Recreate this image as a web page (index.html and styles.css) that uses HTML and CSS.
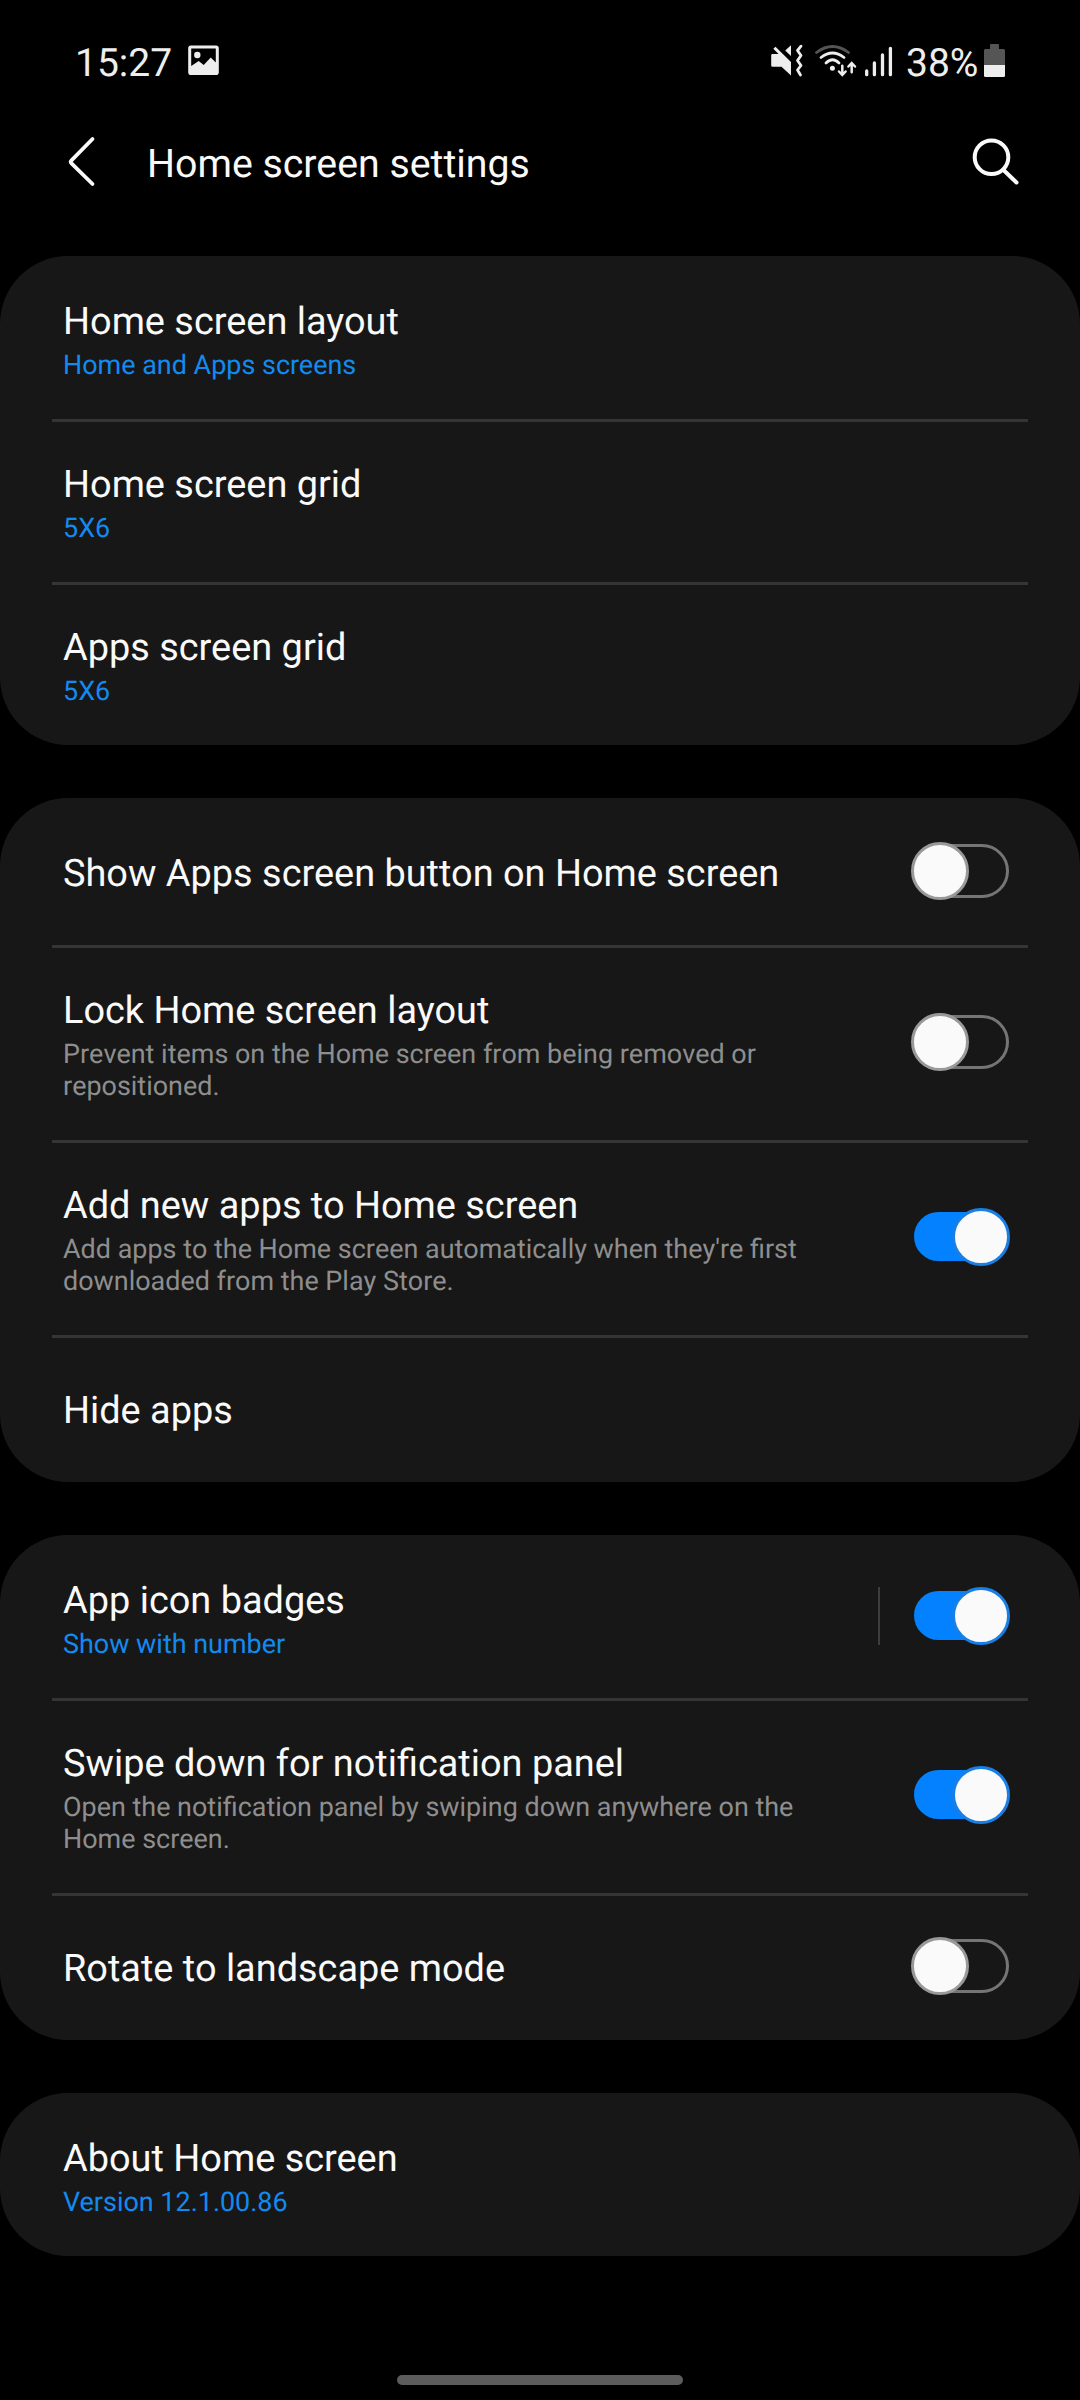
FILE: index.html
```
<!DOCTYPE html>
<html lang="en">
<head>
<meta charset="utf-8">
<title>Home screen settings</title>
<link rel="stylesheet" href="styles.css">
</head>
<body>
<div class="status">
  <span class="clock">15:27</span>
  <svg class="pic" width="32" height="32" viewBox="0 0 32 32"><path fill="#eee" fill-rule="evenodd" d="M3 .5h25a2.8 2.8 0 0 1 2.8 2.8v24a2.8 2.8 0 0 1-2.8 2.800H3A2.800 2.800 0 0 1 .2 27.300v-24A2.800 2.800 0 0 1 3 .5zM3.200 3.500V21l7.500-5 5 4 7-7.500 5.100 5V3.500z"/><circle cx="9.300" cy="10" r="3.200" fill="#eee"/></svg>
  <span class="grow"></span>
  <svg class="indicators" width="136" height="36" viewBox="0 0 136 36" fill="#eee">
    <path d="M2.500 10h6L3.300 4.800l2.200-2.100L21 18v13.500l-9.500-8.700h-9a1.300 1.300 0 0 1-1.300-1.300v-10.200A1.300 1.300 0 0 1 2.500 10z"/>
    <path d="M21 1.300v10.600l-5.800-5.300z"/>
    <path d="M31 2.200l-3.500 4.300 3.500 5-3.500 5 3.500 5-3.500 4.500 3 5" fill="none" stroke="#eee" stroke-width="2.800" stroke-linejoin="round" stroke-linecap="round"/>
    <g fill="none" stroke="#eee" stroke-width="2.800" stroke-linecap="round">
      <path d="M46.500 8.500Q62.500-3.500 78.500 8.500" stroke="#555"/>
      <path d="M51 13.500Q62.500 4.500 74 13.500"/>
      <path d="M56 19Q62.500 12.500 69 19"/>
      <path d="M72.300 21.800v8.500M69 27.500l3.300 3.500 3.300-3.500M81.700 28.200v-8.500M78.400 22.500l3.300-3.500 3.300 3.500" stroke-width="2.500"/>
    </g>
    <circle cx="62.400" cy="24.200" r="2.500"/>
    <path d="M96.700 27v3.700M104.400 19v11.700M112.500 11v19.700M120.400 4.300v26.400" stroke="#eee" stroke-width="3.300" stroke-linecap="round"/>
  </svg>
  <span class="pct">38%</span>
  <svg class="battery" width="21" height="34" viewBox="0 0 21 34"><path fill="#555" d="M7 0h7a1 1 0 0 1 1 1v4h4.500A1.500 1.500 0 0 1 21 6.500V21H0V6.500A1.500 1.500 0 0 1 1.500 5H6V1a1 1 0 0 1 1-1z"/><path fill="#eee" d="M0 21h21v10.500a1.500 1.500 0 0 1-1.500 1.500h-18A1.500 1.500 0 0 1 0 31.500z"/></svg>
</div>
<header class="bar">
  <svg width="30" height="52" viewBox="0 0 30 52"><path d="M26.500 3 5.500 24.300q-1.500 1.500 0 3L26.500 48" fill="none" stroke="#fafafa" stroke-width="3.800" stroke-linecap="round"/></svg>
  <h1>Home screen settings</h1>
  <svg width="48" height="48" viewBox="0 0 48 48" fill="none" stroke="#fafafa" stroke-width="4"><circle cx="19.500" cy="19.200" r="16.800"/><path d="M31.500 32 44.500 44.500" stroke-linecap="round"/></svg>
</header>
<main>
  <section class="card">
    <div class="row"><div class="text"><div class="title">Home screen layout</div><div class="value">Home and Apps screens</div></div></div>
    <div class="row"><div class="text"><div class="title">Home screen grid</div><div class="value">5X6</div></div></div>
    <div class="row"><div class="text"><div class="title">Apps screen grid</div><div class="value">5X6</div></div></div>
  </section>
  <section class="card">
    <div class="row short"><div class="text"><div class="title">Show Apps screen button on Home screen</div></div><span class="switch"></span></div>
    <div class="row"><div class="text"><div class="title">Lock Home screen layout</div><div class="desc">Prevent items on the Home screen from being removed or<br>repositioned.</div></div><span class="switch"></span></div>
    <div class="row"><div class="text"><div class="title">Add new apps to Home screen</div><div class="desc">Add apps to the Home screen automatically when they're first<br>downloaded from the Play Store.</div></div><span class="switch on"></span></div>
    <div class="row short"><div class="text"><div class="title">Hide apps</div></div></div>
  </section>
  <section class="card">
    <div class="row"><div class="text"><div class="title">App icon badges</div><div class="value">Show with number</div></div><span class="split"></span><span class="switch on"></span></div>
    <div class="row"><div class="text"><div class="title">Swipe down for notification panel</div><div class="desc">Open the notification panel by swiping down anywhere on the<br>Home screen.</div></div><span class="switch on"></span></div>
    <div class="row short"><div class="text"><div class="title">Rotate to landscape mode</div></div><span class="switch"></span></div>
  </section>
  <section class="card">
    <div class="row"><div class="text"><div class="title">About Home screen</div><div class="value">Version 12.1.00.86</div></div></div>
  </section>
</main>
<div class="handle"></div>
</body>
</html>
```
FILE: styles.css
```
*, *::before, *::after { box-sizing: border-box; }
body { margin: 0; height: 2400px; background: #000; color: #fafafa; font-family: Roboto, "Noto Sans", sans-serif; text-rendering: geometricPrecision; display: flex; flex-direction: column; overflow: hidden; }
svg { flex: none; display: block; }
.status { height: 112px; padding: 14px 75px 0 75px; display: flex; align-items: center; color: #eee; font-size: 39px; line-height: 46px; }
.clock { width: 98px; }
.pic { margin: 0 0 4px 15px; }
.grow { flex: 1; }
.indicators { margin-bottom: 2px; }
.pct { width: 73px; margin-right: 5px; }
.battery { margin-bottom: 4px; }
.bar { height: 144px; padding: 0 60px 44px 66px; display: flex; align-items: center; }
.bar h1 { flex: 1; margin: 0 0 0 51px; padding-top: 4px; font-size: 39.3px; font-weight: 400; line-height: 46px; }
main { display: flex; flex-direction: column; gap: 53px; }
.card { background: #171717; border-radius: 68px; }
.row { position: relative; padding: 0 71px 0 63px; display: flex; align-items: center; }
.row + .row::before { content: ""; position: absolute; top: 0; left: 52px; right: 52px; height: 3px; background: #353535; }
.text { flex: 1; padding: 42px 0 38px; white-space: nowrap; }
.short .text { padding: 52px 0 47px; }
.title { font-size: 37.9px; line-height: 48px; }
.value, .desc { margin-top: 3px; font-size: 26.95px; line-height: 32px; }
.value { color: #128aef; }
.desc { color: #8e8e8e; font-kerning: none; }
.switch { position: relative; width: 98px; height: 58px; margin-bottom: 1px; display: flex; align-items: center; }
.switch::before { content: ""; width: 95px; height: 54px; margin-left: 3px; border: 3px solid #757575; border-radius: 27px; }
.switch::after { content: ""; position: absolute; left: 0; top: 0; width: 58px; height: 58px; border: 3px solid #999; border-radius: 50%; background: #fafafa; }
.switch.on::before { height: 49px; margin-bottom: 1px; border: 0; background: #0381fe; }
.switch.on::after { left: 41px; border-color: #1a7fe5; }
.split { width: 2px; height: 58px; margin: 0 31px 1px 0; background: #3d3d3d; }
.handle { width: 286px; height: 10px; margin: auto auto 15px; border-radius: 5px; background: #5c5c5c; }
```
